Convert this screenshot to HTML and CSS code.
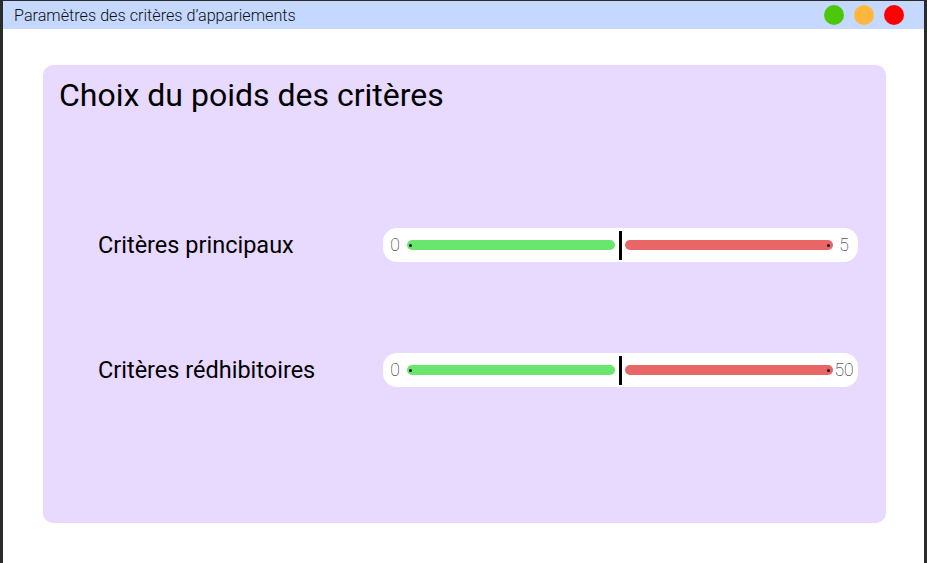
FILE: index.html
```html
<!DOCTYPE html>
<html lang="fr">
<head>
<meta charset="utf-8">
<title>Paramètres des critères d’appariements</title>
<link rel="stylesheet" href="styles.css">
</head>
<body>
<div class="window">
  <header class="titlebar">
    <span class="title">Paramètres des critères d’appariements</span>
    <div class="controls">
      <span class="dot green"></span>
      <span class="dot orange"></span>
      <span class="dot red"></span>
    </div>
  </header>
  <main class="content">
    <section class="card">
      <h1 class="card-title">Choix du poids des critères</h1>
      <div class="rows">
        <div class="row">
          <span class="label">Critères principaux</span>
          <div class="slider">
            <span class="val">0</span>
            <span class="bar bar-green"><i class="pin pin-left"></i></span>
            <span class="divider"></span>
            <span class="bar bar-red"><i class="pin pin-right"></i></span>
            <span class="val val-max">5</span>
          </div>
        </div>
        <div class="row">
          <span class="label">Critères rédhibitoires</span>
          <div class="slider">
            <span class="val">0</span>
            <span class="bar bar-green"><i class="pin pin-left"></i></span>
            <span class="divider"></span>
            <span class="bar bar-red"><i class="pin pin-right"></i></span>
            <span class="val val-max">50</span>
          </div>
        </div>
      </div>
    </section>
  </main>
</div>
</body>
</html>
```
FILE: styles.css
```css
* { box-sizing: border-box; }
html, body { margin: 0; padding: 0; height: 100%; }
body {
  background: #2b2b2b;
  font-family: Roboto, "Noto Sans", sans-serif;
}
.window {
  height: 563px;
  width: 927px;
  border-left: 3px solid #2b2b2b;
  border-right: 3px solid #2b2b2b;
  border-top: 1px solid #2b2b2b;
  background: #ffffff;
  display: flex;
  flex-direction: column;
}
.titlebar {
  height: 28px;
  background: #c5d8ff;
  display: flex;
  align-items: center;
  justify-content: space-between;
  padding: 0 20px 0 11px;
}
.title {
  font-weight: 300;
  font-size: 16.2px;
  color: #111;
}
.controls { display: flex; gap: 10px; }
.dot {
  width: 20px; height: 20px; border-radius: 50%;
  display: block;
}
.green { background: #4cc80a; }
.orange { background: #ffb83d; }
.red { background: #ff0000; }
.content {
  flex: 1;
  padding: 36px 38px 40px 40px;
  display: flex;
}
.card {
  flex: 1;
  background: #e8d9ff;
  border-radius: 10px;
  padding: 10px 28px 0 16px;
}
.card-title {
  margin: 0;
  font-weight: 400;
  font-size: 32px;
  line-height: 40px;
  color: #000;
}
.rows {
  margin-top: 113px;
  display: flex;
  flex-direction: column;
  gap: 91px;
}
.row {
  display: flex;
  align-items: center;
  justify-content: space-between;
  padding-left: 39px;
}
.label {
  font-size: 23.5px;
  color: #000;
}
.slider {
  width: 475px;
  height: 34px;
  background: #fff;
  border-radius: 14px;
  display: flex;
  align-items: center;
}
.val {
  width: 24px;
  text-align: center;
  font-weight: 100;
  font-size: 17.5px;
  color: #000;
}
.val-max { width: 22px; margin-right: 3px; }
.bar {
  width: 208px;
  height: 10px;
  border-radius: 5px;
  display: flex;
  align-items: center;
}
.bar-green { background: #69e66d; }
.bar-red { background: #e86666; justify-content: flex-end; }
.divider {
  width: 3px;
  height: 29px;
  background: #000;
  margin: 0 3px 0 4px;
}
.pin {
  width: 3px; height: 3px; border-radius: 50%;
  background: #111;
  display: block;
}
.pin-left { margin-left: 2px; }
.pin-right { margin-right: 3px; }
```
